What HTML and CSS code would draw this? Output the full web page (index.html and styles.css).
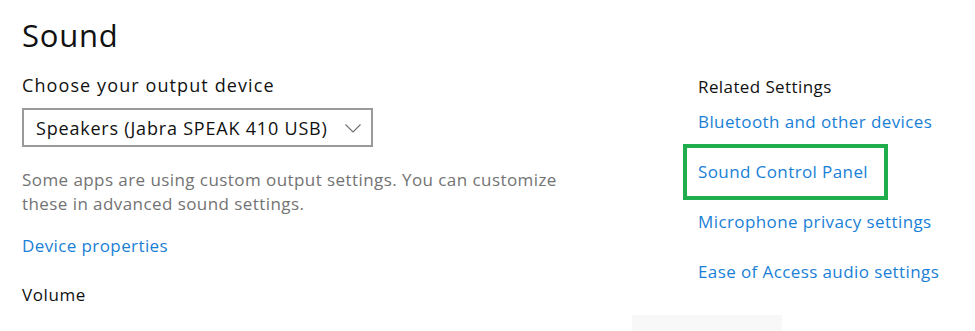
FILE: index.html
```html
<!DOCTYPE html>
<html lang="en">
<head>
  <meta charset="UTF-8">
  <meta name="viewport" content="width=device-width, initial-scale=1.0">
  <title>Sound</title>
  <link rel="stylesheet" href="styles.css">
</head>
<body>

  <div class="page">

    <!-- Coluna principal -->
    <div class="main">
      <h1 class="title">Sound</h1>

      <p class="label">Choose your output device</p>
      <div class="select">
        <span>Speakers (Jabra SPEAK 410 USB)</span>
        <svg class="chevron" width="16" height="9" viewBox="0 0 16 9">
          <polyline points="0.5,0.5 8,8 15.5,0.5" fill="none" stroke="#707070" stroke-width="1.1"/>
        </svg>
      </div>

      <p class="note">Some apps are using custom output settings. You can customize these in advanced sound settings.</p>

      <a class="link device-link" href="#">Device properties</a>

      <p class="volume">Volume</p>
    </div>

    <!-- Configurações relacionadas -->
    <div class="related">
      <p class="related-title">Related Settings</p>
      <a class="link" href="#">Bluetooth and other devices</a>
      <a class="link highlight" href="#">Sound Control Panel</a>
      <a class="link" href="#">Microphone privacy settings</a>
      <a class="link" href="#">Ease of Access audio settings</a>
    </div>

  </div>

  <div class="scrap"></div>

</body>
</html>
```

FILE: styles.css
```css
body {
  font-family: "Open Sans", "Noto Sans", Arial, sans-serif;
  margin: 0;
  padding: 0;
  background-color: #fff;
  color: #000;
  overflow: hidden;
}

p {
  margin: 0;
}

.page {
  display: flex;
  height: 331px;
}

.main {
  width: 676px;
  padding-left: 22px;
  display: flex;
  flex-direction: column;
  align-items: flex-start;
}

.title {
  font-size: 31px;
  font-weight: 400;
  line-height: 40px;
  letter-spacing: 0.8px;
  margin: 15px 0 0 0;
  color: #111;
}

.label {
  font-size: 18px;
  line-height: 24px;
  letter-spacing: 1.1px;
  color: #111;
  margin-top: 18px;
}

.select {
  box-sizing: border-box;
  width: 351px;
  height: 39px;
  margin-top: 11px;
  border: 2px solid #9a9a9a;
  padding: 0 10px 0 12px;
  display: flex;
  align-items: center;
  justify-content: space-between;
  font-size: 18px;
  letter-spacing: 0.8px;
  color: #111;
}

.chevron {
  margin-top: 1px;
}

.note {
  width: 545px;
  font-size: 17px;
  line-height: 24px;
  letter-spacing: 0.43px;
  color: #737373;
  margin-top: 21px;
}

.link {
  display: block;
  font-size: 17px;
  line-height: 24px;
  letter-spacing: 0.4px;
  color: #1a7fd6;
  text-decoration: none;
}

.device-link {
  margin-top: 18px;
}

.volume {
  font-size: 17px;
  line-height: 24px;
  letter-spacing: 0.6px;
  color: #111;
  margin-top: 25px;
}

.related {
  display: flex;
  flex-direction: column;
  align-items: flex-start;
  gap: 26px;
  padding-top: 75px;
}

.related-title {
  font-size: 17px;
  line-height: 24px;
  letter-spacing: 0.4px;
  color: #111;
  margin-bottom: -15px;
}

/* marcação verde em volta do link */
.highlight {
  border: 4px solid #1fae4b;
  padding: 12px 16px 12px 11px;
  margin: -16px 0 -16px -15px;
}

.scrap {
  position: absolute;
  left: 632px;
  top: 315px;
  width: 150px;
  height: 16px;
  background-color: #f8f8f8;
}
```
